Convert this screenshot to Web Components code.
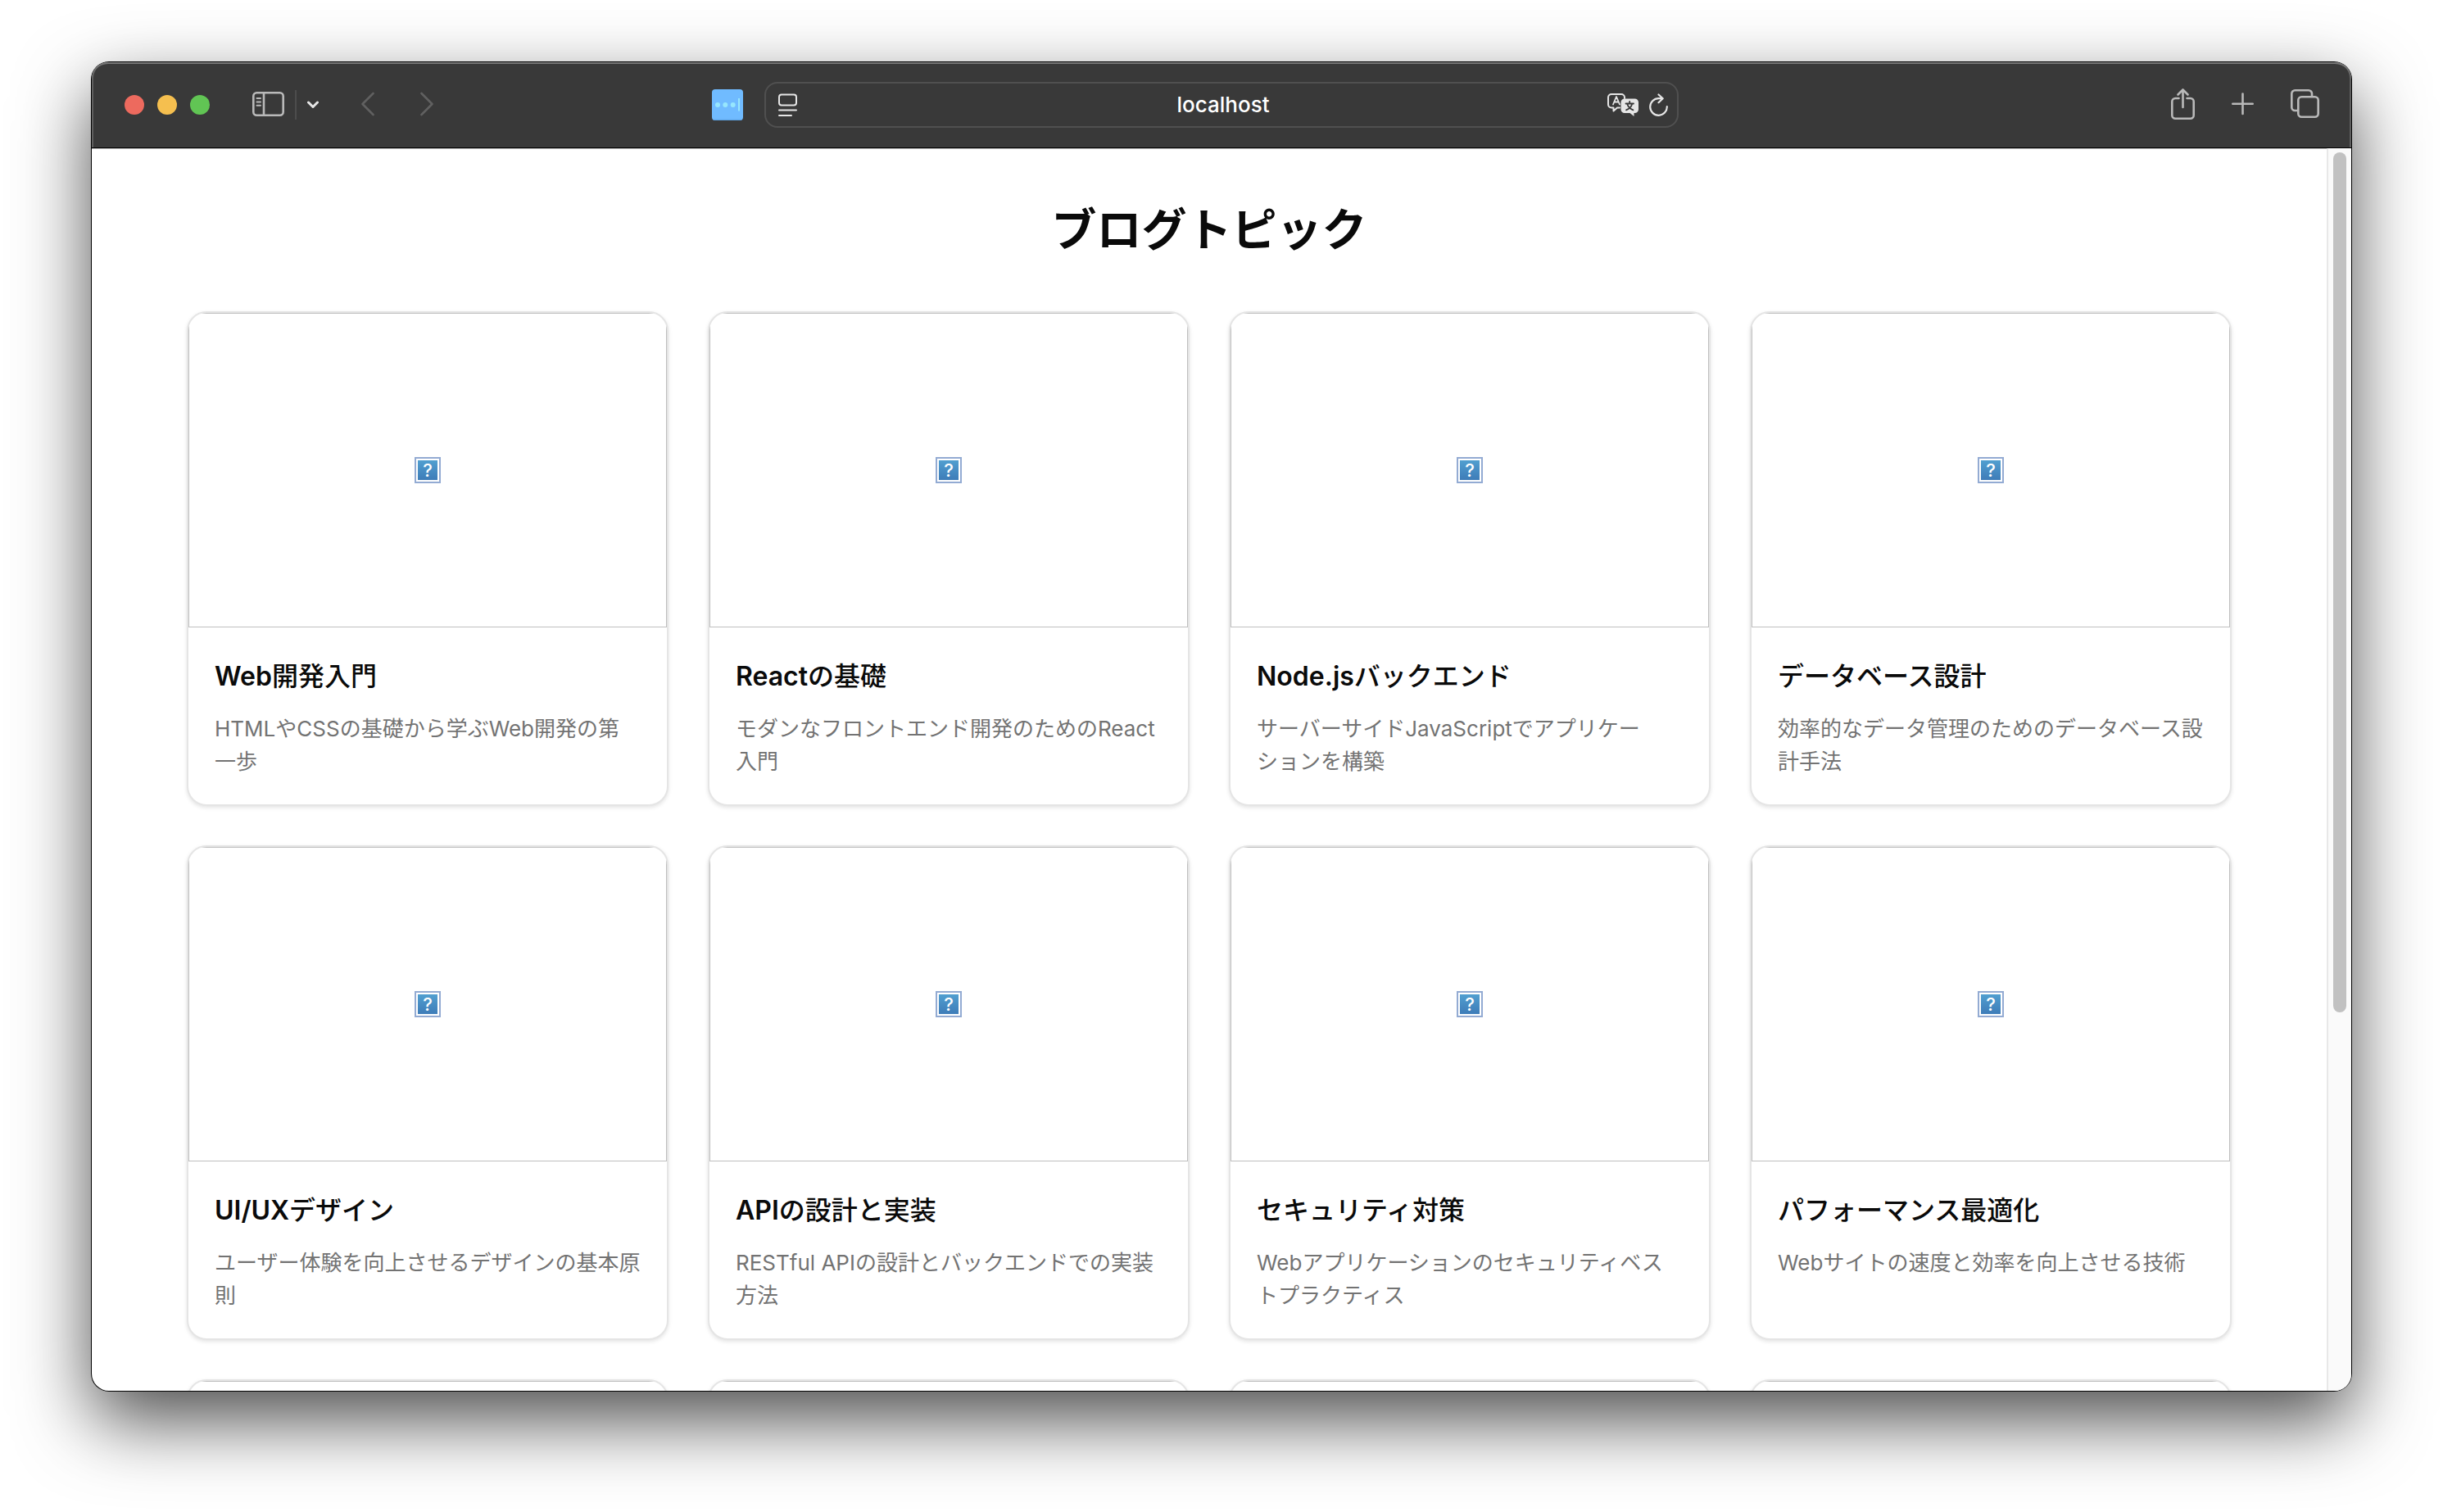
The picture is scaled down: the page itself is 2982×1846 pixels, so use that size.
<!DOCTYPE html>
<html lang="ja">
<head>
<meta charset="utf-8">
<meta name="viewport" content="width=device-width, initial-scale=1">
<title>ブログトピック</title>
<style>
  html, body { margin: 0; height: 100%; background: #fff; }
  body {
    display: flex;
    box-sizing: border-box;
    padding: 76px 112px 148px;
    overflow: hidden;
    font-family: Inter, "Noto Sans CJK JP", sans-serif;
    color: #0a0a0a;
  }
  b { font-weight: 600; }
  .keep { white-space: nowrap; }
</style>
</head>
<body>
<browser-window>
  <browser-toolbar slot="toolbar" address="localhost"></browser-toolbar>
  <topic-page heading="ブログトピック">
    <topic-card><span slot="title"><b>Web</b>開発入門</span>HTMLやCSSの基礎から学ぶWeb開発の第一歩</topic-card>
    <topic-card><span slot="title"><b>React</b>の基礎</span>モダンなフロントエンド開発のためのReact入門</topic-card>
    <topic-card><span slot="title"><b>Node.js</b>バックエンド</span>サーバーサイドJavaScriptでアプリケー<span class="keep">ション</span>を構築</topic-card>
    <topic-card><span slot="title">データベース設計</span>効率的なデータ管理のためのデータベース設計手法</topic-card>
    <topic-card><span slot="title"><b>UI/UX</b>デザイン</span>ユーザー体験を向上させるデザインの基本原則</topic-card>
    <topic-card><span slot="title"><b>API</b>の設計と実装</span>RESTful APIの設計とバックエンドでの実装方法</topic-card>
    <topic-card><span slot="title">セキュリティ対策</span>Webアプリケーションのセキュリティベストプラクティス</topic-card>
    <topic-card><span slot="title">パフォーマンス最適化</span>Webサイトの速度と効率を向上させる技術</topic-card>
    <topic-card pending></topic-card>
    <topic-card pending></topic-card>
    <topic-card pending></topic-card>
    <topic-card pending></topic-card>
  </topic-page>
</browser-window>

<script>
class ShadowElement extends HTMLElement {
  constructor() {
    super();
    this.attachShadow({ mode: 'open' }).innerHTML = this.constructor.markup;
  }
}

class BrowserWindow extends ShadowElement {
  static markup = `
    <style>
      :host {
        flex: 1; min-width: 0;
        display: flex; flex-direction: column;
        border-radius: 21px;
        background: #fff;
        box-shadow: 0 0 0 1px #000, 0 36px 90px rgba(0, 0, 0, .7);
      }
      .view {
        flex: 1; min-height: 0;
        display: flex;
        overflow: hidden;
        border-radius: 0 0 20px 20px;
        border-top: 1px solid #000;
        box-shadow: inset 0 1px #bbb;
      }
      .content { flex: 1; min-width: 0; overflow: hidden; }
      .track {
        width: 16px; padding: 5px 6px;
        border-left: 2px solid #e8e8e8;
        background: #fafafa;
      }
      .thumb { height: 70%; max-height: 1050px; border-radius: 8px; background: #c1c1c1; }
    </style>
    <slot name="toolbar"></slot>
    <div class="view">
      <div class="content"><slot></slot></div>
      <div class="track"><div class="thumb"></div></div>
    </div>`;
}

class BrowserToolbar extends ShadowElement {
  static markup = `
    <style>
      :host {
        display: grid;
        grid-template-columns: 1fr minmax(0, 1116px) 1fr;
        align-items: center;
        height: 104px;
        border-radius: 20px 20px 0 0;
        background: #393939;
        box-shadow: inset 0 2px #777, inset 2px 0 #606060, inset -2px 0 #606060;
      }
      .side { display: flex; align-items: center; }
      .start { padding: 0 26px 0 40px; }
      .end { justify-content: flex-end; gap: 45px; padding-right: 39px; }
      .lights { display: flex; gap: 16px; margin-right: 52px; }
      .lights i { width: 24px; height: 24px; border-radius: 50%; }
      button { display: flex; padding: 0; border: 0; background: none; color: #b9b9b9; }
      svg { display: block; fill: none; stroke: currentColor; stroke-width: 2.6; stroke-linecap: round; stroke-linejoin: round; }
      .divider { width: 2px; height: 36px; margin: 0 13px 0 13px; background: #4c4c4c; }
      .nav { display: flex; gap: 56px; margin-left: 52px; }
      .nav button { color: #606060; }
      .bright { color: #e6e6e6; }
      .extension { margin-left: auto; }
      .address {
        display: grid;
        grid-template-columns: 1fr minmax(0, 400px) 1fr;
        align-items: center;
        box-sizing: border-box;
        height: 56px; padding: 0 11px 0 15px;
        border: 2px solid #505050; border-radius: 16px;
      }
      input {
        min-width: 0; padding: 0; border: 0; outline: 0; background: none;
        color: #fff; text-align: center;
        font: 500 26px/32px Inter, sans-serif;
      }
      .tools { display: flex; justify-content: flex-end; align-items: center; gap: 13px; }
    </style>
    <div class="side start">
      <div class="lights"><i style="background:#ed6a5e"></i><i style="background:#f5bf4f"></i><i style="background:#61c554"></i></div>
      <button aria-label="サイドバー"><svg width="39" height="32" viewBox="0 0 39 32"><rect x="1.3" y="1.3" width="36.4" height="27.4" rx="4"/><path d="M14 1.3v27.4"/><path stroke-width="2" d="M5.5 8h4.5M5.5 12.4h4.5M5.5 16.8h4.5"/></svg></button>
      <span class="divider"></span>
      <button class="bright" aria-label="タブグループ"><svg width="14" height="36" viewBox="0 0 14 36"><path stroke-width="3" d="M1.5 15l5.5 5.5L12.5 15"/></svg></button>
      <div class="nav">
        <button aria-label="戻る"><svg width="16" height="32" viewBox="0 0 16 32"><path d="M14.5 2L1.5 15l13 13"/></svg></button>
        <button aria-label="進む"><svg width="16" height="32" viewBox="0 0 16 32"><path d="M1.5 2l13 13-13 13"/></svg></button>
      </div>
      <button class="extension" aria-label="拡張機能"><svg width="38" height="38" viewBox="0 0 38 38"><rect width="38" height="38" rx="4" fill="#70bbff" stroke="none"/><path d="M2 37.3h34" stroke="#5b9fe0" stroke-width="1"/><g fill="#97e6fd" stroke="none"><circle cx="7" cy="19" r="3"/><circle cx="16.3" cy="19" r="3"/><circle cx="25.7" cy="19" r="3"/><rect x="32" y="11" width="2" height="15.5"/></g></svg></button>
    </div>
    <div class="address">
      <button class="bright" aria-label="リーダー"><svg width="23" height="28" viewBox="0 0 23 28"><g stroke-width="2"><rect x="1" y="1.5" width="21" height="13" rx="3"/><path d="M1 20.500h21M1 27h15"/></g></svg></button>
      <input type="text" aria-label="アドレス" spellcheck="false">
      <div class="tools">
        <button class="bright" aria-label="翻訳"><svg width="38" height="28" viewBox="0 0 38 28">
          <path stroke-width="2" d="M15 17.5h-3l-4.500 4V17.5H5a4 4 0 0 1-4-4V5a4 4 0 0 1 4-4h12a4 4 0 0 1 4 4v1"/>
          <path stroke-width="1.8" d="M7 13.5L11 4l4 9.500M8.500 10.500h5"/>
          <path fill="currentColor" stroke="none" d="M21 6.5h12.5a4.5 4.5 0 0 1 4.5 4.5v8.500a4.5 4.5 0 0 1-4.5 4.500H32.500v4L27.5 24H21a4.5 4.5 0 0 1-4.500-4.500V11A4.5 4.5 0 0 1 21 6.500z"/>
          <path stroke="#393939" stroke-width="1.8" d="M22.5 12.5h9.500M27.200 9.800v2.500M30.300 12.500c-1 4-3.500 6.500-7.300 7.800M24.200 12.500c1 4 3.800 6.500 7.300 7.800"/></svg></button>
        <button class="bright" aria-label="再読み込み"><svg width="23" height="28" viewBox="0 0 23 28"><path stroke-width="2.2" d="M21.800 16.200A10.300 10.300 0 1 1 11.500 6.200h4.800M11.500 1.500l5.200 4.700-5.200 5"/></svg></button>
      </div>
    </div>
    <div class="side end">
      <button aria-label="共有"><svg width="29" height="40" viewBox="0 1 29 40"><path d="M9.500 13H5.300a4 4 0 0 0-4 4v16.700a4 4 0 0 0 4 4h18.400a4 4 0 0 0 4-4V17a4 4 0 0 0-4-4h-4.200M14.500 24V2.500M8.500 8.500l6-6 6 6"/></svg></button>
      <button aria-label="新規タブ"><svg width="27" height="30" viewBox="0 0 27 30"><path d="M13.500 1.500v24.400M1.300 13.700h24.400"/></svg></button>
      <button aria-label="タブの概要"><svg width="35" height="38" viewBox="0 0 35 38"><rect x="9.3" y="9.3" width="24.4" height="24.4" rx="4"/><path d="M26 8.500V5.300a4 4 0 0 0-4-4H5.300a4 4 0 0 0-4 4V22a4 4 0 0 0 4 4h3.200"/></svg></button>
    </div>`;
  connectedCallback() {
    const input = this.shadowRoot.querySelector('input');
    input.setAttribute('value', this.getAttribute('address'));
  }
}

class TopicPage extends ShadowElement {
  static markup = `
    <style>
      :host { display: block; max-width: 2496px; margin: 0 auto; padding: 63px 32px; }
      h1 { margin: 0 0 64px; text-align: center; font-size: 55px; line-height: 72px; font-weight: 700; }
      .grid { display: grid; grid-template-columns: repeat(4, minmax(0, 1fr)); gap: 48px; }
    </style>
    <h1></h1>
    <div class="grid"><slot></slot></div>`;
  connectedCallback() {
    this.shadowRoot.querySelector('h1').textContent = this.getAttribute('heading');
  }
}

class TopicCard extends ShadowElement {
  static markup = `
    <style>
      :host {
        display: block;
        border: 2px solid #e5e5e5; border-radius: 24px;
        background: #fff;
        box-shadow: 0 2px 4px rgba(0, 0, 0, .06), 0 2px 6px rgba(0, 0, 0, .06);
        overflow: hidden;
      }
      :host([pending]) .missing { display: none; }
      .picture {
        display: flex; align-items: center; justify-content: center;
        box-sizing: border-box; height: 384px;
        border: 1px solid #bfbfbf;
      }
      .missing {
        box-sizing: border-box; width: 32px; height: 32px;
        border: 2px solid #93abd3; padding: 2px;
      }
      .missing span {
        display: block; height: 24px;
        background: linear-gradient(#519fd0, #3e7cb8);
        color: #fff; text-align: center;
        font: 500 22px/24px Inter, sans-serif;
      }
      .body { padding: 32px; }
      h2 { margin: 0 0 16px; min-height: 56px; font-size: 32px; line-height: 56px; font-weight: 500; }
      p { margin: 0; min-height: 80px; font-size: 26px; line-height: 40px; color: #737373; line-break: strict; }
    </style>
    <div class="picture"><div class="missing"><span>?</span></div></div>
    <div class="body">
      <h2><slot name="title"></slot></h2>
      <p><slot></slot></p>
    </div>`;
}

customElements.define('browser-window', BrowserWindow);
customElements.define('browser-toolbar', BrowserToolbar);
customElements.define('topic-page', TopicPage);
customElements.define('topic-card', TopicCard);
</script>
</body>
</html>
